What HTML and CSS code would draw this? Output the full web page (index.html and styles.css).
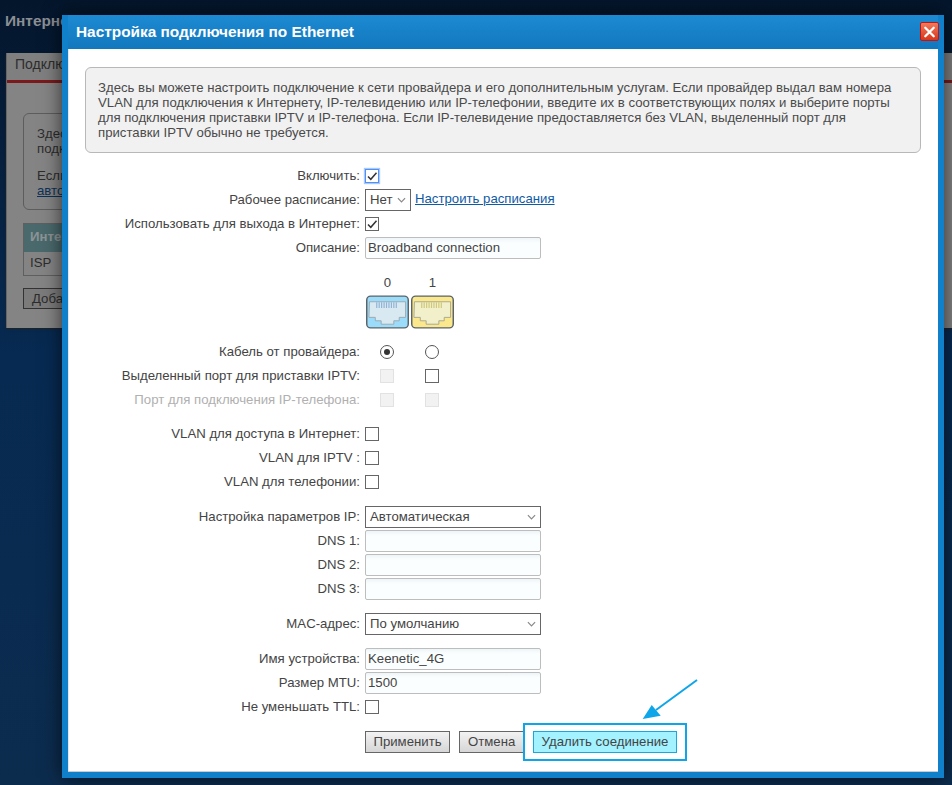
FILE: index.html
```html
<!DOCTYPE html>
<html lang="ru">
<head>
<meta charset="utf-8">
<title>Настройка подключения по Ethernet</title>
<link rel="stylesheet" href="styles.css">
</head>
<body>
<div class="page">
  <h1 class="page-title">Интернет</h1>
  <section class="panel">
    <div class="tabs"><span class="tab">Подключения</span></div>
    <div class="panel-body">
      <div class="panel-note">
        <p>Здесь вы<br>подключ</p>
        <p>Если<br><a href="#">автомат</a></p>
      </div>
      <div class="table">
        <div class="table-head">Интерфейс</div>
        <div class="table-row">ISP</div>
      </div>
      <button class="page-btn" type="button">Добавить</button>
    </div>
  </section>
</div>

<div class="modal">
  <header class="modal-head">
    <h2 class="modal-title">Настройка подключения по Ethernet</h2>
    <span class="close">
      <svg width="18" height="18" viewBox="0 0 18 18"><path d="M4.5 4.5l9 9M13.5 4.5l-9 9" stroke="#fff" stroke-width="2.4" fill="none" stroke-linecap="round"/></svg>
    </span>
  </header>
  <div class="modal-body">
    <div class="intro">Здесь вы можете настроить подключение к сети провайдера и его дополнительным услугам. Если провайдер выдал вам номера<br>VLAN для подключения к Интернету, IP-телевидению или IP-телефонии, введите их в соответствующих полях и выберите порты<br>для подключения приставки IPTV и IP-телефона. Если IP-телевидение предоставляется без VLAN, выделенный порт для<br>приставки IPTV обычно не требуется.</div>

    <div class="form">
      <div class="row"><label>Включить:</label><span class="check focus"><svg class="tick" viewBox="0 0 12 12"><path d="M2 6.5l2.8 2.8L10.500 2.800"/></svg></span></div>
      <div class="row"><label>Рабочее расписание:</label><span class="select short">Нет<svg class="chev" viewBox="0 0 10 6"><path d="M1 1l4 4 4-4"/></svg></span><a class="link" href="#">Настроить расписания</a></div>
      <div class="row"><label>Использовать для выхода в Интернет:</label><span class="check"><svg class="tick" viewBox="0 0 12 12"><path d="M2 6.5l2.8 2.8L10.500 2.800"/></svg></span></div>
      <div class="row"><label>Описание:</label><span class="input">Broadband connection</span></div>

      <div class="ports-head"><span>0</span><span>1</span></div>
      <div class="ports-icons">
        <svg class="port" viewBox="0 0 44 34"><rect x=".75" y=".75" width="42.5" height="32.5" rx="4" fill="#9cdcfb" stroke="#5b6468" stroke-width="1.5"/><path d="M3.5 6.5h37v16h-6.500v3.500h-5.500v3.500h-13v-3.500h-6v-3.500h-6.500z" fill="#d9e9f2" stroke="#9aaab2"/><path d="M11 7v6M13.500 7v6M16 7v6M18.500 7v6M21 7v6M23.500 7v6M26 7v6M28.500 7v6M31 7v6" stroke="#8fb2d6" stroke-width="1.200"/></svg>
        <svg class="port" viewBox="0 0 44 34"><rect x=".75" y=".75" width="42.5" height="32.5" rx="4" fill="#fbe78c" stroke="#5b6468" stroke-width="1.5"/><path d="M3.5 6.5h37v16h-6.500v3.500h-5.500v3.500h-13v-3.500h-6v-3.500h-6.500z" fill="#f2efcb" stroke="#aaa98e"/><path d="M11 7v6M13.500 7v6M16 7v6M18.500 7v6M21 7v6M23.500 7v6M26 7v6M28.500 7v6M31 7v6" stroke="#cfc878" stroke-width="1.200"/></svg>
      </div>
      <div class="row port-row"><label>Кабель от провайдера:</label><span class="cell"><span class="radio on"></span></span><span class="cell"><span class="radio"></span></span></div>
      <div class="row"><label>Выделенный порт для приставки IPTV:</label><span class="cell"><span class="check off"></span></span><span class="cell"><span class="check"></span></span></div>
      <div class="row"><label class="muted">Порт для подключения IP-телефона:</label><span class="cell"><span class="check off"></span></span><span class="cell"><span class="check off"></span></span></div>

      <div class="row gap-lg"><label>VLAN для доступа в Интернет:</label><span class="check"></span></div>
      <div class="row"><label>VLAN для IPTV :</label><span class="check"></span></div>
      <div class="row"><label>VLAN для телефонии:</label><span class="check"></span></div>

      <div class="row gap"><label>Настройка параметров IP:</label><span class="select wide">Автоматическая<svg class="chev" viewBox="0 0 10 6"><path d="M1 1l4 4 4-4"/></svg></span></div>
      <div class="row"><label>DNS 1:</label><span class="input"></span></div>
      <div class="row"><label>DNS 2:</label><span class="input"></span></div>
      <div class="row"><label>DNS 3:</label><span class="input"></span></div>

      <div class="row gap"><label>MAC-адрес:</label><span class="select wide">По умолчанию<svg class="chev" viewBox="0 0 10 6"><path d="M1 1l4 4 4-4"/></svg></span></div>

      <div class="row gap"><label>Имя устройства:</label><span class="input">Keenetic_4G</span></div>
      <div class="row"><label>Размер MTU:</label><span class="input">1500</span></div>
      <div class="row"><label>Не уменьшать TTL:</label><span class="check"></span></div>

      <div class="actions">
        <button class="btn apply" type="button">Применить</button>
        <button class="btn cancel" type="button">Отмена</button>
        <span class="highlight"><button class="btn danger" type="button">Удалить соединение</button></span>
      </div>
    </div>
  </div>
</div>

<svg class="arrow" width="70" height="50" viewBox="0 0 70 50"><path d="M57 3L16 33" stroke="#0ea5e9" stroke-width="2" fill="none"/><path d="M2.700 42L11.700 28L20.700 38.700z" fill="#0ea5e9"/></svg>
</body>
</html>
```
FILE: styles.css
```css
* { box-sizing: border-box; }
html, body { margin: 0; height: 785px; overflow: hidden; }
body {
  position: relative;
  font: 13.2px/15px "Liberation Sans", Arial, sans-serif;
  color: #444;
  background: linear-gradient(180deg, #04162c 0%, #072a52 45%, #0c2c4e 100%);
}
.page { padding: 11px 0 0 6px; }
.page-title {
  margin: 0 0 22px -1px;
  font: bold 15.4px/20px "Liberation Sans", Arial, sans-serif;
  color: #8b8f94;
}
.panel {
  width: 946px;
  height: 275px;
  background: #848484;
  border-left: 1px solid #666;
  box-shadow: 0 1px 2px #222;
  color: #2c2c2c;
}
.tabs { height: 30px; background: #7f7f7f; border-bottom: 3px solid #7a1a1c; padding: 4px 8px 0; }
.tab { font-size: 14px; color: #2d2d2d; }
.panel-body { padding: 30px 16px; }
.panel-note {
  height: 97px;
  border: 1px solid #5d5d5d;
  border-radius: 6px;
  padding: 12px 13px;
  margin-bottom: 13px;
}
.panel-note p { margin: 0 0 12px; }
.panel-note a { color: #0d3158; }
.table { height: 53px; border: 1px solid #5f5f5f; }
.table-head { height: 28px; background: #4a696c; color: #8d9496; font-weight: bold; padding: 5px 6px; }
.table-row { padding: 3px 6px; }
.page-btn { margin-top: 12px; height: 21px; width: 120px; background: #7b7b7b; border: 1px solid #333; font: inherit; text-align: left; padding: 0 8px; color: #2c2c2c; }

.modal {
  position: absolute;
  left: 62px;
  top: 15px;
  width: 882px;
  height: 763px;
  background: #1180cb;
  padding: 0 6px 6px;
  box-shadow: 0 0 18px rgba(0, 0, 0, .65);
}
.modal-head {
  height: 34px;
  display: flex;
  justify-content: space-between;
  align-items: center;
  padding-left: 8px;
  background: linear-gradient(180deg, #1c8ad2, #1278be);
}
.modal-title { margin: 0; font: bold 15.4px/18px "Liberation Sans", Arial, sans-serif; color: #fff; }
.close {
  margin: -1px -1px 0 0;
  width: 19px;
  height: 19px;
  display: flex;
  align-items: center;
  justify-content: center;
  background: linear-gradient(180deg, #f07a5a, #d8361c);
  border: 1px solid #c11515;
  border-radius: 2px;
}
.modal-body { height: 723px; background: #fff; padding: 18px 17px 0; border-bottom: 1px solid #ccc; box-shadow: inset 1px 0 1px #e4e4e4; }
.intro {
  height: 86px;
  border: 1px solid #b8b8b8;
  border-radius: 6px;
  background: #f1f1f1;
  padding: 12px 12px;
  color: #4a4a4a;
  white-space: nowrap;
}
.form { margin-top: 11px; }
.row { display: flex; align-items: center; height: 24px; }
.row label { width: 275px; text-align: right; margin-right: 5px; padding-bottom: 2px; flex: none; }
.row .muted { color: #b0b0b0; }
.gap { margin-top: 11px; }
.gap-lg { margin-top: 10px; }
.check {
  display: inline-flex;
  width: 14px;
  height: 14px;
  border: 1px solid #666;
  background: #fff;
  align-items: center;
  justify-content: center;
}
.check.focus { border-color: #4d90fe; box-shadow: 0 0 1px 1px #a9c9f7; }
.check.off { border-color: #e2e2e2; background: #f2f2f2; }
.tick { width: 12px; height: 12px; fill: none; stroke: #333; stroke-width: 1.5; }
.radio {
  display: inline-flex;
  width: 14px;
  height: 14px;
  border: 1px solid #555;
  border-radius: 50%;
  background: #fff;
  align-items: center;
  justify-content: center;
}
.radio.on::after { content: ""; width: 6px; height: 6px; border-radius: 50%; background: #333; }
.select {
  display: inline-flex;
  align-items: center;
  justify-content: space-between;
  height: 22px;
  border: 1px solid #666;
  background: #fff;
  padding: 0 4px 2px;
}
.select.short { width: 46px; }
.select.wide { width: 176px; }
.chev { width: 9px; height: 6px; margin-top: 2px; fill: none; stroke: #888; stroke-width: 1.3; }
.link { margin-left: 4px; padding-bottom: 1px; margin-top: -2px; color: #0f5aa5; }
.input {
  display: block;
  width: 176px;
  height: 22px;
  padding: 2px 2px;
  border: 1px solid #bdbdbd;
  border-radius: 2px;
  background: linear-gradient(180deg, #eef5f8 0, #fbfeff 5px);
}
.ports-head { display: flex; margin: 15px 0 0 280px; height: 16px; }
.ports-head span { width: 45px; text-align: center; }
.ports-icons { display: flex; gap: 2px; margin: 4px 0 0 281px; height: 34px; }
.port { width: 43px; height: 34px; }
.port-row { margin-top: 11px; }
.cell { width: 44px; display: flex; justify-content: center; }
.cell + .cell { margin-left: 1px; }
.actions { display: flex; align-items: center; margin: 4px 0 0 280px; height: 38px; }
.btn {
  height: 22px;
  border: 1px solid #666;
  background: linear-gradient(180deg, #f2f2f2, #d6d6d6);
  font: inherit;
  color: #444;
  padding: 0 0 1px;
}
.apply { width: 85px; margin-right: 9px; }
.cancel { width: 70px; text-align: left; padding-left: 8px; flex: none; }
.highlight {
  display: inline-flex;
  align-items: center;
  justify-content: center;
  flex: none;
  width: 164px;
  height: 38px;
  margin-left: -6px;
  border: 2px solid #0ea5e9;
  background: #fff;
  position: relative;
}
.danger { width: 144px; background: #a3f2ff; border-color: #19a7de; }
.arrow { position: absolute; left: 640px; top: 677px; }
```
